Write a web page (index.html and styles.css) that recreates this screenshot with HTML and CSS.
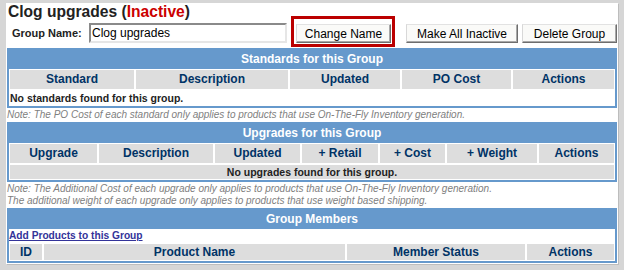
FILE: index.html
```html
<!DOCTYPE html>
<html lang="en">
<head>
    <meta charset="UTF-8">
    <title>Clog upgrades</title>
    <link rel="stylesheet" href="styles.css">
</head>
<body>
    <div class="page">
        <h1 class="title">Clog upgrades (<span class="inactive">Inactive</span>)</h1>

        <!-- group name / actions -->
        <div class="name-row">
            <label class="name-label">Group Name:</label>
            <input class="name-input" type="text" value="Clog upgrades">
            <span class="hilite"><button class="btn btn-change">Change Name</button></span>
            <button class="btn btn-inactive">Make All Inactive</button>
            <button class="btn btn-delete">Delete Group</button>
        </div>

        <!-- standards -->
        <div class="box">
            <div class="box-head">Standards for this Group</div>
            <div class="grid grid-std">
                <div class="th">Standard</div>
                <div class="th">Description</div>
                <div class="th">Updated</div>
                <div class="th">PO Cost</div>
                <div class="th">Actions</div>
                <div class="empty">No standards found for this group.</div>
            </div>
        </div>
        <p class="note">Note: The PO Cost of each standard only applies to products that use On-The-Fly Inventory generation.</p>

        <!-- upgrades -->
        <div class="box">
            <div class="box-head">Upgrades for this Group</div>
            <div class="grid grid-upg">
                <div class="th">Upgrade</div>
                <div class="th">Description</div>
                <div class="th">Updated</div>
                <div class="th">+ Retail</div>
                <div class="th">+ Cost</div>
                <div class="th">+ Weight</div>
                <div class="th">Actions</div>
                <div class="empty empty-grey">No upgrades found for this group.</div>
            </div>
        </div>
        <p class="note">Note: The Additional Cost of each upgrade only applies to products that use On-The-Fly Inventory generation.<br>
        The additional weight of each upgrade only applies to products that use weight based shipping.</p>

        <!-- members -->
        <div class="box">
            <div class="box-head">Group Members</div>
            <div class="grid grid-mem">
                <div class="link-row"><a href="#">Add Products to this Group</a></div>
                <div class="th th-small">ID</div>
                <div class="th th-small">Product Name</div>
                <div class="th th-small">Member Status</div>
                <div class="th th-small">Actions</div>
            </div>
        </div>
    </div>
</body>
</html>
```

FILE: styles.css
```css
*{
    margin: 0;
    padding: 0;
    box-sizing: border-box;
}
html, body{
    height: 100%;
}
body{
    background-color: #d6d6d6;
    font-family: "Liberation Sans", Arial, sans-serif;
    color: #222;
    padding-top: 3px;
}
.page{
    margin: 0 6px;
    background-color: #fff;
    padding: 0 1px 1px 1px;
    box-shadow: 1px 1px 0 #bdbdbd;
}
.title{
    font-size: 15.6px;
    font-weight: bold;
    line-height: 18px;
    padding-left: 1px;
    color: #222;
}
.inactive{
    color: #cc0000;
}
.name-row{
    display: flex;
    align-items: flex-end;
    height: 27px;
    padding-bottom: 5px;
}
.name-label{
    width: 77px;
    margin-left: 5px;
    font-size: 11px;
    font-weight: bold;
    line-height: 20px;
}
.name-input{
    width: 198px;
    height: 20px;
    border: 2px solid;
    border-color: #8a8a8a #e6e6e6 #e6e6e6 #8a8a8a;
    padding: 0 1px;
    font-family: "Liberation Sans", Arial, sans-serif;
    font-size: 12px;
    color: #000;
    outline: none;
}
.hilite{
    display: flex;
    border: 3px solid #bb0000;
    padding: 5px 1px 1px 2px;
    margin: 0 0 -4px 4px;
}
.btn{
    height: 19px;
    padding: 0;
    font-family: "Liberation Sans", Arial, sans-serif;
    font-size: 12px;
    color: #000;
    background-color: #fafaf8;
    border: 1px solid;
    border-color: #e2e2e2 #6e6e6e #6e6e6e #d8d8d8;
    box-shadow: inset -1px -1px 0 #a8a8a8;
}
.btn-change{
    width: 95px;
}
.btn-inactive{
    width: 112px;
    margin-left: 11px;
}
.btn-delete{
    width: 95px;
    margin-left: 4px;
}
.box{
    border: 2px solid #6699cc;
}
.box-head{
    background-color: #6699cc;
    color: #fff;
    font-size: 12px;
    font-weight: bold;
    line-height: 19px;
    text-align: center;
}
.grid{
    display: grid;
    gap: 2px;
    padding: 1px;
}
.grid-std{
    grid-template-columns: 124px 152px 110px 109px 101px;
}
.grid-upg{
    grid-template-columns: 87px 114px 85px 76px 65px 90px 75px;
}
.grid-mem{
    grid-template-columns: 32px 301px 178px 87px;
}
.th{
    background-color: #dddddd;
    color: #003366;
    font-size: 12px;
    font-weight: bold;
    line-height: 19px;
    text-align: center;
}
.th-small{
    line-height: 16px;
}
.empty{
    grid-column: 1 / -1;
    font-size: 10.5px;
    font-weight: bold;
    line-height: 14px;
    color: #222;
}
.empty-grey{
    background-color: #dddddd;
    text-align: center;
}
.note{
    font-size: 10px;
    font-style: italic;
    line-height: 12px;
    color: #808080;
    padding: 1px 0;
}
.link-row{
    grid-column: 1 / -1;
    margin-left: -1px;
    font-size: 10.2px;
    font-weight: bold;
    line-height: 12px;
}
.link-row a{
    color: #333399;
}
```
